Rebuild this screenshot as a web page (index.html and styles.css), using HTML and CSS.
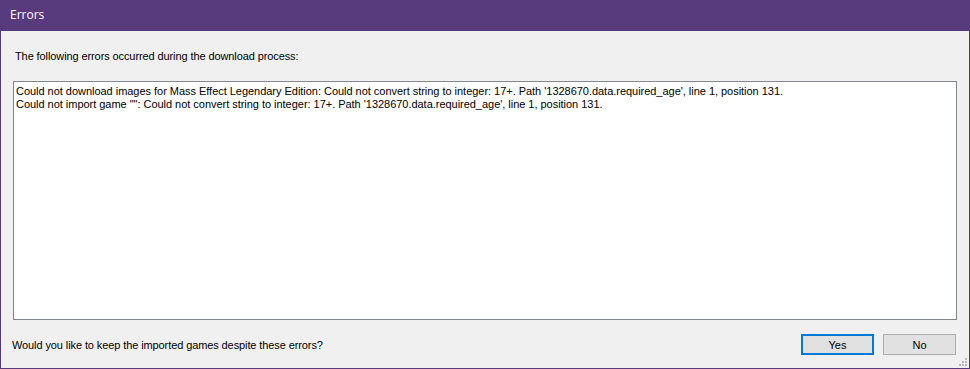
FILE: index.html
```html
<!DOCTYPE html>
<html>
<head>
	<meta charset="utf-8">
	<title>Errors</title>
	<link rel="stylesheet" href="styles.css">
</head>
<body>
	<div class="window">
		<div class="titlebar">Errors</div>
		<div class="content">
			<p class="intro">The following errors occurred during the download process:</p>
			<div class="log">
				<div>Could not download images for Mass Effect Legendary Edition: Could not convert string to integer: 17+. Path '1328670.data.required_age', line 1, position 131.</div>
				<div>Could not import game "": Could not convert string to integer: 17+. Path '1328670.data.required_age', line 1, position 131.</div>
			</div>
			<div class="bottom">
				<p class="question">Would you like to keep the imported games despite these errors?</p>
				<div class="buttons">
					<button class="btn default">Yes</button>
					<button class="btn">No</button>
				</div>
			</div>
		</div>
		<div class="grip">
			<span></span><span></span><span></span><span></span><span></span><span></span>
		</div>
	</div>
</body>
</html>
```

FILE: styles.css
```css
*{margin:0;padding:0;box-sizing:border-box;}
body{
	width:970px;
	height:369px;
	overflow:hidden;
	font-family:"Liberation Sans",Arial,sans-serif;
	font-size:11px;
	color:#000;
	background:#f0f0f0;
}
.window{
	position:relative;
	width:970px;
	height:369px;
	display:flex;
	flex-direction:column;
	border:1px solid #573b7d;
	border-top:none;
	background:#f0f0f0;
}
.titlebar{
	height:31px;
	margin:0 -1px;
	padding-left:10px;
	line-height:30px;
	font-family:"Open Sans","Liberation Sans",sans-serif;
	font-size:12px;
	color:#fff;
	background:#573b7d;
}
.content{
	flex:1;
	display:flex;
	flex-direction:column;
	padding:19px 12px 13px 12px;
}
.intro{
	line-height:13px;
	padding-left:2px;
	letter-spacing:-0.1px;
}
.log{
	margin-top:18px;
	height:239px;
	border:1px solid #828790;
	background:#fff;
	padding:3px 3px 3px 2px;
	line-height:13px;
	white-space:nowrap;
	overflow:hidden;
	letter-spacing:-0.03px;
}
.bottom{
	margin-top:14px;
	display:flex;
	align-items:center;
	justify-content:space-between;
}
.question{
	line-height:13px;
	margin-left:-1px;
	padding-top:2px;
	letter-spacing:-0.1px;
}
.buttons{
	display:flex;
	gap:9px;
	margin-right:1px;
}
.btn{
	width:73px;
	height:21px;
	font-family:"Liberation Sans",Arial,sans-serif;
	font-size:11px;
	color:#000;
	background:#e1e1e1;
	border:1px solid #adadad;
}
.btn.default{
	border:2px solid #0078d7;
}
.grip{
	position:absolute;
	right:2px;
	bottom:2px;
	width:8px;
	height:8px;
}
.grip span{
	position:absolute;
	width:2px;
	height:2px;
	background:#b8b8b8;
}
.grip span:nth-child(1){right:0;bottom:0;}
.grip span:nth-child(2){right:3px;bottom:0;}
.grip span:nth-child(3){right:6px;bottom:0;}
.grip span:nth-child(4){right:0;bottom:3px;}
.grip span:nth-child(5){right:3px;bottom:3px;}
.grip span:nth-child(6){right:0;bottom:6px;}
```
